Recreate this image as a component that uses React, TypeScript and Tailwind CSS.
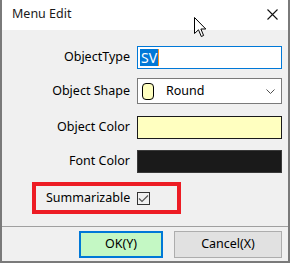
import React from 'react';

const font = { fontFamily: '"Noto Sans", "Segoe UI", sans-serif' };

function Cursor() {
  return (
    <svg className="absolute left-[194px] top-[17px]" width="13" height="21" viewBox="0 0 13 21">
      <path
        d="M0.5 0.5 L0.5 16.5 L4.5 12.8 L7.3 19.5 L9.6 18.5 L6.9 12 L11.8 12 Z"
        fill="#fff"
        stroke="#000"
        strokeWidth="1"
        strokeLinejoin="miter"
      />
    </svg>
  );
}

function Label({ children }: { children: React.ReactNode }) {
  return <div className="w-[128px] pr-[0px] text-right text-[12.5px] text-black leading-none">{children}</div>;
}

export default function App() {
  return (
    <div className="relative w-[293px] h-[264px] bg-white" style={font}>
      <div className="w-[290px] h-[263px] border-x-2 border-b-2 border-[#7a7a7a] bg-[#f0f0f0] flex flex-col">
        {/* title bar */}
        <div className="h-[30px] bg-white flex items-center justify-between pl-[10px] pr-[10px] shrink-0">
          <span className="text-[12.5px] text-[#1a1a1a] -mt-[2px]">Menu Edit</span>
          <svg width="11" height="11" viewBox="0 0 11 11" className="-mt-[2px]">
            <path d="M0.5 0.5 L10.5 10.5 M10.5 0.5 L0.5 10.5" stroke="#111" strokeWidth="1.1" />
          </svg>
        </div>

        {/* ObjectType */}
        <div className="flex items-center gap-[7px] mt-[16px] h-[23px]">
          <Label>ObjectType</Label>
          <div className="w-[145px] h-[23px] bg-white border border-[#0078d7] flex items-center pl-[2px]">
            <span className="bg-[#0078d7] text-white text-[14px] leading-[17px] h-[17px] px-[1px]">SV</span>
            <span className="w-[1px] h-[17px] bg-[#f7931e]" />
          </div>
        </div>

        {/* Object Shape */}
        <div className="flex items-center gap-[7px] mt-[9px] h-[26px]">
          <Label>Object Shape</Label>
          <div className="w-[145px] h-[26px] bg-white border border-[#7a7a7a] flex items-center pl-[4px] pr-[6px]">
            <span className="w-[12px] h-[17px] rounded-[4px] border border-black bg-[#ffffc0]" />
            <span className="ml-[12px] text-[12.5px] text-black flex-1 leading-none">Round</span>
            <svg width="9" height="5" viewBox="0 0 9 5">
              <path d="M0.5 0.5 L4.5 4.5 L8.5 0.5" fill="none" stroke="#505050" strokeWidth="1" />
            </svg>
          </div>
        </div>

        {/* Object Color */}
        <div className="flex items-center gap-[7px] mt-[12px] h-[23px]">
          <Label>Object Color</Label>
          <div className="w-[145px] h-[23px] bg-[#ffffc0] border border-[#1a1a1a]" />
        </div>

        {/* Font Color */}
        <div className="flex items-center gap-[7px] mt-[11px] h-[23px]">
          <Label>Font Color</Label>
          <div className="w-[145px] h-[23px] bg-[#1a1a1a] border border-[#3a3a3a]" />
        </div>

        {/* Summarizable */}
        <div className="mt-[9px] ml-[30px] w-[149px] h-[32px] border-[4px] border-[#ed1c24] flex items-center">
          <span className="ml-[10px] text-[12.5px] text-black leading-none">Summarizable</span>
          <span className="ml-[7px] w-[13px] h-[13px] border border-[#333] bg-[#f0f0f0] flex items-center justify-center">
            <svg width="11" height="9" viewBox="0 0 11 9">
              <path d="M1 4.5 L4 7.5 L10 1.5" fill="none" stroke="#555" strokeWidth="1.2" />
            </svg>
          </span>
        </div>

        {/* separator */}
        <div className="mt-[12px] h-[1px] bg-[#a0a0a0]" />

        {/* buttons */}
        <div className="flex justify-end gap-[11px] mt-[4px] pr-[6px]">
          <button className="w-[84px] h-[27px] border-2 border-[#0078d7] bg-[#c4f8c4] text-[12.5px] text-black">
            OK(Y)
          </button>
          <button className="w-[108px] h-[27px] border border-[#adadad] bg-[#e1e1e1] text-[12.5px] text-black">
            Cancel(X)
          </button>
        </div>
      </div>
      <Cursor />
    </div>
  );
}
